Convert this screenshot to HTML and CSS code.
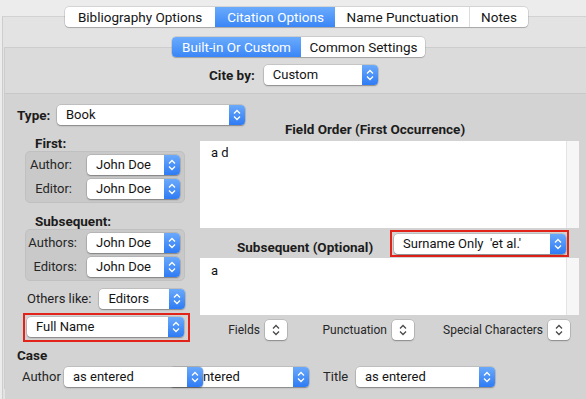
FILE: index.html
```html
<!DOCTYPE html>
<html lang="en">
<head>
  <meta charset="utf-8">
  <title>Citation Options</title>
  <meta name="viewport" content="width=device-width, initial-scale=1">
  <link rel="stylesheet" href="styles.css">
</head>
<body>
  <div class="tabview">
    <div class="seg seg-main">
      <span class="seg-item w-bib">Bibliography Options</span>
      <span class="seg-item w-cit on">Citation Options</span>
      <span class="seg-item w-name">Name Punctuation</span>
      <span class="seg-item w-notes">Notes</span>
    </div>

    <div class="subview">
      <div class="seg seg-sub">
        <span class="seg-item w-built on">Built-in Or Custom</span>
        <span class="seg-item w-common">Common Settings</span>
      </div>

      <div class="citeby">
        <span class="bold">Cite by:</span>
        <div class="popup w-citeby"><span class="val">Custom</span><span class="arr"><svg width="10" height="14" viewBox="0 0 10 14"><polyline points="2,5.5 5,2.5 8,5.5"/><polyline points="2,8.5 5,11.5 8,8.5"/></svg></span></div>
      </div>

      <div class="content">
        <div class="columns">
          <div class="left">
            <div class="type-row">
              <span class="bold type-lbl">Type:</span>
              <div class="popup w-type"><span class="val">Book</span><span class="arr"><svg width="10" height="14" viewBox="0 0 10 14"><polyline points="2,5.5 5,2.5 8,5.5"/><polyline points="2,8.5 5,11.5 8,8.5"/></svg></span></div>
            </div>

            <div class="bold sect">First:</div>
            <div class="group group-first">
              <span class="glbl">Author:</span>
              <div class="popup"><span class="val">John Doe</span><span class="arr"><svg width="10" height="14" viewBox="0 0 10 14"><polyline points="2,5.5 5,2.5 8,5.5"/><polyline points="2,8.5 5,11.5 8,8.5"/></svg></span></div>
              <span class="glbl">Editor:</span>
              <div class="popup"><span class="val">John Doe</span><span class="arr"><svg width="10" height="14" viewBox="0 0 10 14"><polyline points="2,5.5 5,2.5 8,5.5"/><polyline points="2,8.5 5,11.5 8,8.5"/></svg></span></div>
            </div>

            <div class="bold sect">Subsequent:</div>
            <div class="group group-subs">
              <span class="glbl">Authors:</span>
              <div class="popup"><span class="val">John Doe</span><span class="arr"><svg width="10" height="14" viewBox="0 0 10 14"><polyline points="2,5.5 5,2.5 8,5.5"/><polyline points="2,8.5 5,11.5 8,8.5"/></svg></span></div>
              <span class="glbl">Editors:</span>
              <div class="popup"><span class="val">John Doe</span><span class="arr"><svg width="10" height="14" viewBox="0 0 10 14"><polyline points="2,5.5 5,2.5 8,5.5"/><polyline points="2,8.5 5,11.5 8,8.5"/></svg></span></div>
            </div>

            <div class="others-row">
              <span>Others like:</span>
              <div class="popup w-others"><span class="val">Editors</span><span class="arr"><svg width="10" height="14" viewBox="0 0 10 14"><polyline points="2,5.5 5,2.5 8,5.5"/><polyline points="2,8.5 5,11.5 8,8.5"/></svg></span></div>
            </div>

            <div class="mark mark-full">
              <div class="popup w-full"><span class="val">Full Name</span><span class="arr"><svg width="10" height="14" viewBox="0 0 10 14"><polyline points="2,5.5 5,2.5 8,5.5"/><polyline points="2,8.5 5,11.5 8,8.5"/></svg></span></div>
            </div>
          </div>

          <div class="right">
            <div class="bold order-lbl">Field Order (First Occurrence)</div>
            <div class="field field-first">
              <div class="text">a d</div>
              <div class="track"></div>
            </div>

            <div class="subs-row">
              <span class="bold opt-lbl">Subsequent (Optional)</span>
              <div class="mark mark-etal">
                <div class="popup w-etal"><span class="val">Surname Only  'et al.'</span><span class="arr"><svg width="10" height="14" viewBox="0 0 10 14"><polyline points="2,5.5 5,2.5 8,5.5"/><polyline points="2,8.5 5,11.5 8,8.5"/></svg></span></div>
              </div>
            </div>
            <div class="field field-subs">
              <div class="text">a</div>
              <div class="track"></div>
            </div>

            <div class="steppers">
              <div class="step-item step-fields"><span>Fields</span><span class="stepper"><svg width="10" height="14" viewBox="0 0 10 14"><polyline points="2,5.5 5,2.5 8,5.5"/><polyline points="2,8.5 5,11.5 8,8.5"/></svg></span></div>
              <div class="step-item step-punct"><span>Punctuation</span><span class="stepper"><svg width="10" height="14" viewBox="0 0 10 14"><polyline points="2,5.5 5,2.5 8,5.5"/><polyline points="2,8.5 5,11.5 8,8.5"/></svg></span></div>
              <div class="step-item step-special"><span>Special Characters</span><span class="stepper"><svg width="10" height="14" viewBox="0 0 10 14"><polyline points="2,5.5 5,2.5 8,5.5"/><polyline points="2,8.5 5,11.5 8,8.5"/></svg></span></div>
            </div>
          </div>
        </div>

        <div class="bold case-lbl">Case</div>
        <div class="case-row">
          <span class="author-lbl">Author</span>
          <div class="popup w-case case-front"><span class="val">as entered</span><span class="arr"><svg width="10" height="14" viewBox="0 0 10 14"><polyline points="2,5.5 5,2.5 8,5.5"/><polyline points="2,8.5 5,11.5 8,8.5"/></svg></span></div>
          <div class="popup w-case case-back"><span class="val">as entered</span><span class="arr"><svg width="10" height="14" viewBox="0 0 10 14"><polyline points="2,5.5 5,2.5 8,5.5"/><polyline points="2,8.5 5,11.5 8,8.5"/></svg></span></div>
          <span class="title-lbl">Title</span>
          <div class="popup w-case"><span class="val">as entered</span><span class="arr"><svg width="10" height="14" viewBox="0 0 10 14"><polyline points="2,5.5 5,2.5 8,5.5"/><polyline points="2,8.5 5,11.5 8,8.5"/></svg></span></div>
        </div>
      </div>
    </div>
  </div>
</body>
</html>
```

FILE: styles.css
```css
* { margin: 0; padding: 0; box-sizing: border-box; }
body {
  font-family: Roboto, "Liberation Sans", sans-serif; font-size: 13px; line-height: 14px;
  color: #1f1f1f; background: #ececec;
  width: 586px; height: 399px; overflow: hidden;
}
.bold { font-weight: 700; color: #1c1c1c; font-size: 13.5px; }

/* tab views */
.tabview {
  margin: 16px 0 0 2px; height: 383px;
  border-top: 1px solid #d2d2d2; border-left: 1px solid #cdcdcd;
  background: #e3e3e3;
}
.subview {
  margin: 20px 0 0 1px; height: 342px;
  border-top: 1px solid #cdcdcd; border-left: 1px solid #cdcdcd;
  background: #dbdbdb;
}
.content {
  margin-top: 8px; height: 306px; padding: 11px 0 0 12px;
  border-top: 1px solid #c8c8c8; background: #d3d3d3;
}

/* segmented controls */
.seg {
  display: flex; width: fit-content; height: 20px;
  background: #fff; border-radius: 4px;
  box-shadow: 0 0 0 0.5px rgba(0,0,0,0.2), 0 1px 1px rgba(0,0,0,0.18);
  overflow: hidden;
}
.seg-main { margin: -10px 0 0 62px; }
.seg-sub { margin: -11px 0 0 167px; }
.seg-item {
  display: flex; align-items: center; justify-content: center;
  color: #141414; border-left: 1px solid #dcdcdc; font-size: 13.5px;
}
.seg-item:first-child { border-left: none; }
.seg-item.on { background: linear-gradient(#6aabfc, #3a86f7); color: #fff; border-left-color: transparent; }
.seg-item.on + .seg-item { border-left-color: transparent; }
.w-bib { width: 150px; }
.w-cit { width: 120px; }
.w-name { width: 134px; }
.w-notes { width: 59px; }
.w-built { width: 129px; }
.w-common { width: 124px; }

/* popups */
.popup {
  display: flex; align-items: center; height: 20px; flex: none;
  background: #fff; border-radius: 4px; padding-left: 9px;
  box-shadow: 0 0 0 0.5px rgba(0,0,0,0.18), 0 1px 1.5px rgba(0,0,0,0.3);
  overflow: hidden; color: #141414;
}
.popup .val { flex: 1; white-space: pre; }
.arr {
  width: 16px; height: 100%; display: flex; align-items: center; justify-content: center;
  background: linear-gradient(#6aa9fb, #2e7bf4);
}
.arr svg polyline, .stepper svg polyline { fill: none; stroke: #fff; stroke-width: 1.3; }
.stepper svg polyline { stroke: #4a4a4a; }

.citeby { display: flex; align-items: center; margin: 8px 0 0 204px; gap: 9px; }
.w-citeby { width: 114px; }

/* columns */
.columns { display: flex; }
.left { width: 183px; flex: none; }
.right { width: 379px; flex: none; padding-top: 17px; }

.type-row { display: flex; align-items: center; }
.type-lbl { width: 40px; flex: none; }
.w-type { width: 188px; }

.sect { margin: 11px 0 0 18px; }

.group {
  display: grid; align-items: center; row-gap: 4px;
  width: 160px; margin: 1px 0 0 8px; padding: 3px 0;
  background: #c9c9c9; border: 1px solid #c0c0c0; border-radius: 5px;
}
.group .glbl { text-align: right; color: #262626; }
.group-first { grid-template-columns: 46px 93px; column-gap: 15px; }
.group-subs { grid-template-columns: 51px 93px; column-gap: 10px; }

.others-row { display: flex; align-items: center; gap: 8px; margin: 8px 0 0 10px; }
.w-others { width: 86px; }

.mark { border: 2px solid #e2231a; width: fit-content; }
.mark-full { margin: 4px 0 0 6px; padding: 2px 4px 3px 2px; }
.w-full { width: 157px; }

.order-lbl { text-align: center; padding-right: 29px; }
.field { display: flex; background: #fff; margin-top: 5px; }
.field .text { flex: 1; padding: 4px 11px; line-height: 16px; color: #111; }
.field .track { width: 13px; background: #f6f6f6; border-left: 1px solid #e4e4e4; }
.field-first { height: 87px; }
.field-subs { height: 57px; margin-top: 1px; }
.field-subs .text { padding-top: 5px; }

.subs-row { display: flex; align-items: center; margin-top: 2px; }
.opt-lbl { margin-left: 37px; padding-top: 6px; }
.mark-etal { margin: 0 10px 0 auto; padding: 2px 1px 1px 2px; }
.w-etal { width: 172px; }

.steppers { display: flex; margin-top: 5px; font-size: 12px; }
.step-item { display: flex; align-items: center; justify-content: flex-end; gap: 5px; color: #262626; flex: none; }
.step-fields { width: 87px; }
.step-punct { width: 127px; }
.step-special { width: 156px; }
.stepper {
  width: 22px; height: 20px; display: flex; align-items: center; justify-content: center;
  background: #fff; border-radius: 4px; flex: none;
  box-shadow: 0 0 0 0.5px rgba(0,0,0,0.2), 0 1px 1.5px rgba(0,0,0,0.28);
}

/* case */
.case-lbl { margin-top: 6px; }
.case-row { display: flex; align-items: center; margin: 5px 0 0 5px; color: #262626; }
.author-lbl { width: 42px; flex: none; }
.w-case { width: 139px; }
.case-front { position: relative; z-index: 1; }
.case-back { margin-left: -33px; }
.title-lbl { margin-left: 14px; width: 33px; flex: none; }
```
